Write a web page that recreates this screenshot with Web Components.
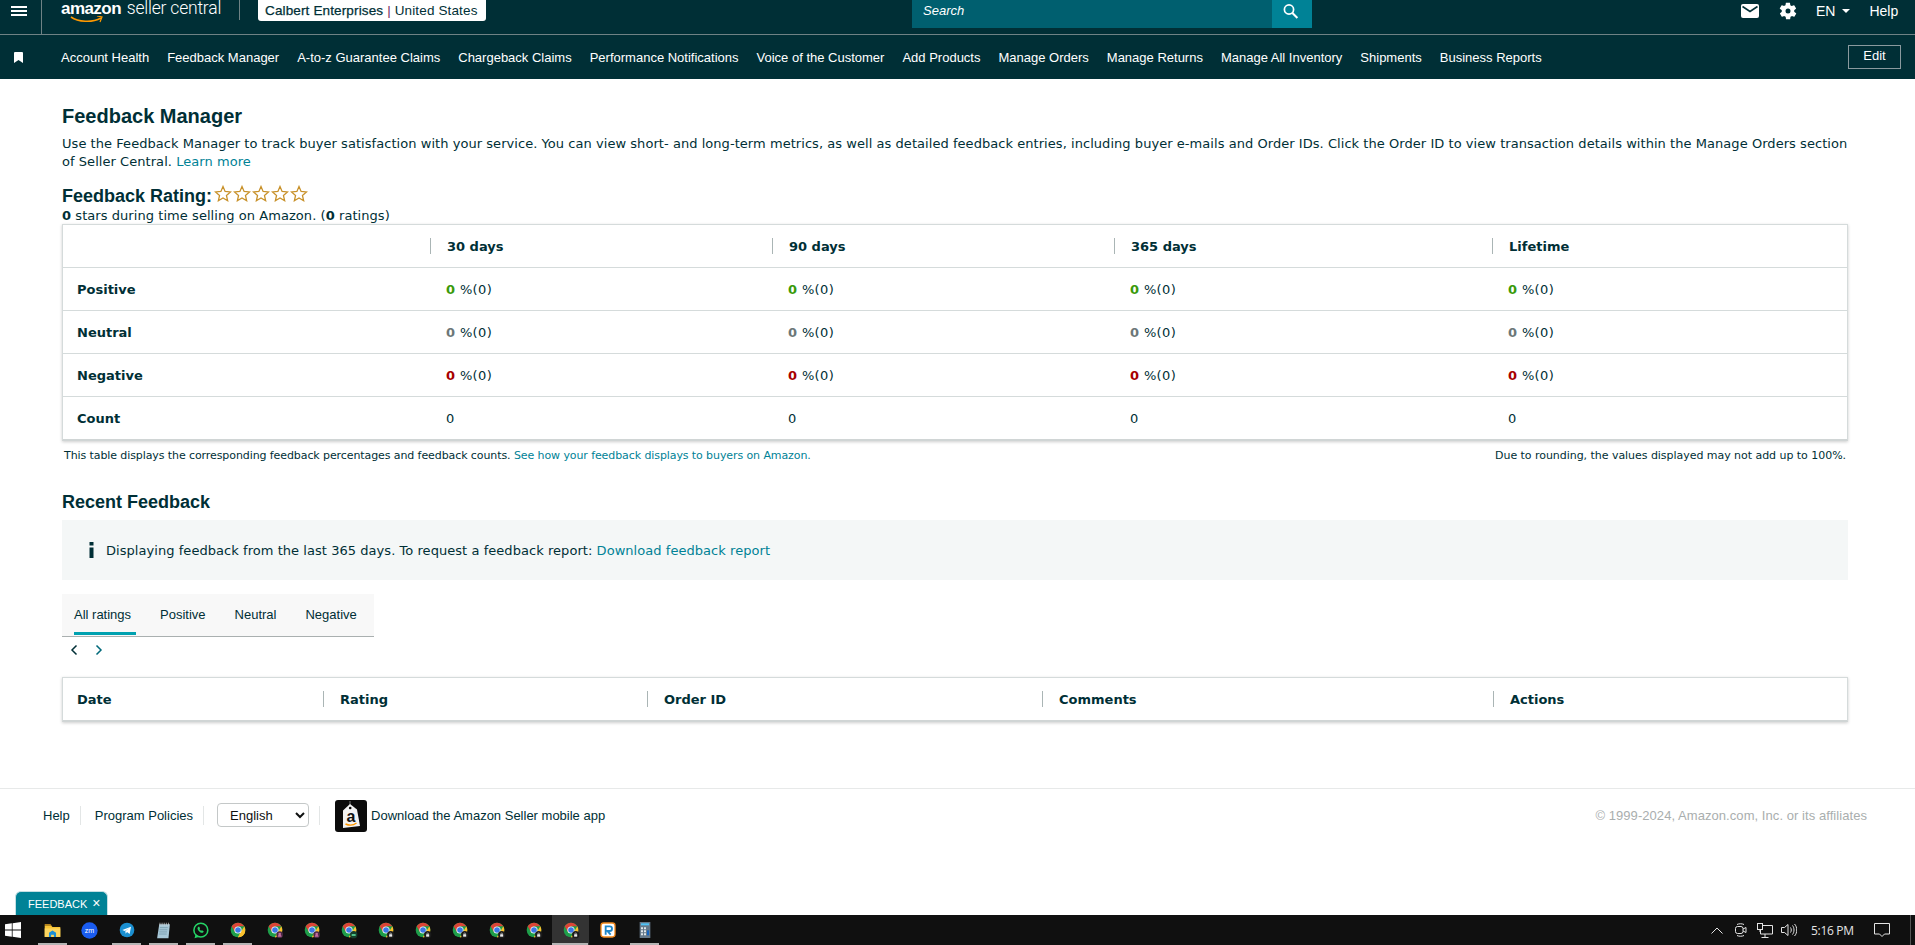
<!DOCTYPE html>
<html lang="en">
<head>
<meta charset="utf-8">
<title>Feedback Manager</title>
<style>
html, body { margin: 0; height: 100%; overflow: hidden; background: #fff; }
body { display: flex; flex-direction: column; height: 945px; font-family: "DejaVu Sans", sans-serif; color: #002f36; }
</style>
</head>
<body>
<sc-topbar></sc-topbar>
<sc-navbar>
  <nav-link>Account Health</nav-link>
  <nav-link>Feedback Manager</nav-link>
  <nav-link>A-to-z Guarantee Claims</nav-link>
  <nav-link>Chargeback Claims</nav-link>
  <nav-link>Performance Notifications</nav-link>
  <nav-link>Voice of the Customer</nav-link>
  <nav-link>Add Products</nav-link>
  <nav-link>Manage Orders</nav-link>
  <nav-link>Manage Returns</nav-link>
  <nav-link>Manage All Inventory</nav-link>
  <nav-link>Shipments</nav-link>
  <nav-link>Business Reports</nav-link>
</sc-navbar>
<feedback-page>
  <page-intro></page-intro>
  <metrics-table>
    <metric-row label="Positive" tone="#3a9a0a"></metric-row>
    <metric-row label="Neutral" tone="#6c7778"></metric-row>
    <metric-row label="Negative" tone="#a80000"></metric-row>
    <metric-row label="Count"></metric-row>
  </metrics-table>
  <table-note></table-note>
  <section-title>Recent Feedback</section-title>
  <info-notice></info-notice>
  <rating-tabs></rating-tabs>
  <recent-table></recent-table>
</feedback-page>
<sc-footer></sc-footer>
<win-taskbar></win-taskbar>

<script>
const LINK = '#008296';
const ARIAL = '"Liberation Sans", Arial, sans-serif';

function define(name, html, onConnect) {
  const t = document.createElement('template');
  t.innerHTML = html;
  customElements.define(name, class extends HTMLElement {
    constructor() {
      super();
      this.attachShadow({ mode: 'open' });
      this.shadowRoot.appendChild(t.content.cloneNode(true));
    }
    connectedCallback() {
      if (onConnect) onConnect(this, this.shadowRoot);
    }
  });
}

define('sc-topbar', `
<style>
:host { display: flex; align-items: flex-start; height: 34px; background: #002f36; border-bottom: 1px solid #6f8285; color: #fff; font-family: ${ARIAL}; flex: none; }
.burger { width: 42px; height: 34px; border-right: 1px solid #6f8285; box-sizing: border-box; flex: none; padding: 6px 0 0 11px; }
.burger svg { display: block; }
.logo { flex: none; width: 178px; margin-left: 19px; height: 28px; white-space: nowrap; }
.word { display: block; font-size: 17px; line-height: 16px; margin-top: 0; }
.word b { letter-spacing: -.55px; }
.word span { font-family: Roboto, sans-serif; font-weight: 300; letter-spacing: -.2px; margin-left: 1px; font-size: 17.5px; }
.smile { display: block; margin: -1px 0 0 9px; }
.sep { width: 1px; height: 20px; background: #6f8285; flex: none; }
.chip { margin-left: 18px; height: 21px; width: 228px; background: #fff; color: #002f36; border-radius: 0 0 3px 3px; font-size: 13.5px; letter-spacing: .14px; line-height: 21px; flex: none; box-sizing: border-box; padding-left: 7px; white-space: nowrap; }
.chip b { font-weight: 400; -webkit-text-stroke: .25px #002f36; }
.chip i { font-style: normal; color: #7a1f63; }
.search { margin-left: 426px; width: 360px; height: 28px; background: #005f6f; font-size: 13px; font-style: italic; line-height: 21px; padding-left: 11px; box-sizing: border-box; flex: none; }
.go { width: 40px; height: 28px; background: #008296; flex: none; padding: 3px 0 0 10px; box-sizing: border-box; }
.right { flex: none; display: flex; align-items: center; height: 21px; margin-left: 429px; font-size: 14px; }
.en { margin-left: 18px; }
.caret { width: 0; height: 0; border: 4px solid transparent; border-top: 4px solid #fff; border-bottom: 0; margin-left: 7px; }
.help { margin-left: 19px; }
.gear { margin-left: 19px; }
</style>
<div class="burger"><svg width="16" height="10"><rect width="16" height="2" y="0" fill="#fff"/><rect width="16" height="2" y="4" fill="#fff"/><rect width="16" height="2" y="8" fill="#fff"/></svg></div>
<div class="logo">
  <span class="word"><b>amazon</b> <span>seller central</span></span>
  <svg class="smile" width="34" height="8" viewBox="0 0 34 8"><path d="M1 1c7 5 21 6 30 1" fill="none" stroke="#f90" stroke-width="1.6"/><path d="M27 0l5 1-2 5" fill="none" stroke="#f90" stroke-width="1.2"/></svg>
</div>
<div class="sep"></div>
<div class="chip"><b>Calbert Enterprises</b> <i>|</i> United States</div>
<div class="search">Search</div>
<div class="go"><svg width="18" height="18" viewBox="0 0 18 18"><circle cx="7" cy="6.500" r="4.600" fill="none" stroke="#fff" stroke-width="1.700"/><path d="M10.400 10l5 5" stroke="#fff" stroke-width="2"/></svg></div>
<div class="right">
  <svg width="18" height="14" viewBox="0 0 18 14"><rect width="18" height="14" rx="2" fill="#fff"/><path d="M1.500 2.500L9 7.500l7.500-5" fill="none" stroke="#002f36" stroke-width="1.600"/></svg>
  <svg class="gear" width="20" height="20" viewBox="0 0 24 24"><path fill="#fff" fill-rule="evenodd" d="M19.400 13c.1-.3.1-.7.1-1s0-.7-.1-1l2.100-1.600c.2-.2.2-.4.1-.6l-2-3.500c-.1-.2-.4-.3-.6-.2l-2.500 1c-.5-.4-1.100-.7-1.700-1l-.4-2.600c0-.3-.2-.5-.5-.5h-4c-.3 0-.5.2-.5.4l-.4 2.700c-.6.2-1.100.6-1.700 1l-2.500-1c-.2-.1-.5 0-.6.2l-2 3.500c-.1.2-.1.4.1.6L4.600 11c-.1.3-.1.7-.1 1s0 .7.1 1l-2.100 1.600c-.2.2-.2.4-.1.6l2 3.500c.1.2.4.3.6.2l2.500-1c.5.4 1.100.7 1.700 1l.4 2.600c0 .3.2.5.5.5h4c.3 0 .5-.2.5-.4l.4-2.700c.6-.2 1.100-.6 1.700-1l2.500 1c.2.1.5 0 .6-.2l2-3.500c.1-.2.1-.4-.1-.6L19.400 13zM12 15a3 3 0 1 1 0-6 3 3 0 0 1 0 6z"/></svg>
  <span class="en">EN</span><span class="caret"></span><span class="help">Help</span>
</div>
`);

define('sc-navbar', `
<style>
:host { display: flex; align-items: center; height: 44px; background: #002f36; flex: none; font-family: ${ARIAL}; color: #fff; }
.mark { width: 61px; flex: none; padding: 0 0 0 14px; box-sizing: border-box; }
.mark svg { display: block; }
.links { display: flex; gap: 18px; flex: 1; padding-top: 2px; }
.edit { flex: none; width: 53px; height: 24px; margin: 0 14px 0 0; box-sizing: border-box; border: 1px solid #8a9a9e; text-align: center; font-size: 13px; line-height: 20px; }
</style>
<div class="mark"><svg width="9" height="11" viewBox="0 0 9 11"><path d="M0 1q0-1 1-1h7q1 0 1 1v10L4.500 8 0 11z" fill="#fff"/></svg></div>
<div class="links"><slot></slot></div>
<div class="edit">Edit</div>
`);

define('nav-link', `<style>:host { display: block; font-size: 13px; line-height: 16px; white-space: nowrap; }</style><slot></slot>`);

define('feedback-page', `
<style>:host { display: block; flex: 1; min-height: 0; padding: 25px 67px 0 62px; }</style>
<slot></slot>
`);

const star = '<svg width="18" height="18" viewBox="0 0 24 24"><path d="M12 2l2.800 6.600 7.200.7-5.400 4.700 1.600 7-6.200-3.700-6.200 3.700 1.600-7L2 9.300l7.200-.7z" fill="#fff" stroke="#c8912a" stroke-width="1.700" stroke-linejoin="miter"/></svg>';

define('page-intro', `
<style>
:host { display: block; font-family: "DejaVu Sans", sans-serif; color: #002f36; }
h1, h2 { margin: 0; font-family: ${ARIAL}; }
h1 { font-size: 20px; line-height: 24px; }
p { margin: 7px 0 0; font-size: 13px; line-height: 18px; letter-spacing: .05px; }
a { color: ${LINK}; }
.rate { display: flex; align-items: center; margin-top: 16px; height: 18px; }
h2 { font-size: 18px; line-height: 22px; }
.stars { display: flex; margin-left: 2px; margin-top: -4px; }
.stars svg { display: block; margin-right: 1px; }
.sub { font-size: 13px; line-height: 16px; margin-top: 3px; height: 16px; letter-spacing: .06px; }
</style>
<h1>Feedback Manager</h1>
<p>Use the Feedback Manager to track buyer satisfaction with your service. You can view short- and long-term metrics, as well as detailed feedback entries, including buyer e-mails and Order IDs. Click the Order ID to view transaction details within the Manage Orders section of Seller Central. <a>Learn more</a></p>
<div class="rate"><h2>Feedback Rating:</h2><div class="stars">${star.repeat(5)}</div></div>
<div class="sub"><b>0</b> stars during time selling on Amazon. (<b>0</b> ratings)</div>
`);

const CARD = `border: 1px solid #d5dbdb; border-bottom: 2px solid #d0d5d5; box-shadow: 0 1px 3px rgba(0,0,0,.2); background: #fff; font-family: "DejaVu Sans", sans-serif; font-size: 13px; color: #002f36;`;
const METRIC_COLS = '367px 342px 342px 378px 1fr';

define('metrics-table', `
<style>
:host { display: block; ${CARD} }
.head { display: grid; grid-template-columns: ${METRIC_COLS}; height: 42px; align-items: center; font-weight: 700; }
.head span { display: block; padding-left: 16px; border-left: 1px solid #aab5b5; height: 16px; line-height: 17px; }
.head span:empty { border-left: 0; }
</style>
<div class="head"><span></span><span>30 days</span><span>90 days</span><span>365 days</span><span>Lifetime</span></div>
<slot></slot>
`);

define('metric-row', `
<style>
:host { display: grid; grid-template-columns: ${METRIC_COLS}; height: 42px; border-top: 1px solid #d5dbdb; align-items: center; font-size: 13px; }
b.l { padding-left: 14px; }
span { padding-left: 16px; letter-spacing: .35px; }
</style>
<b class="l"></b>
`, (el, root) => {
  if (root.querySelector('span')) return;
  root.querySelector('.l').textContent = el.getAttribute('label');
  const tone = el.getAttribute('tone');
  for (let i = 0; i < 4; i++) {
    const c = document.createElement('span');
    c.innerHTML = tone ? `<b style="color:${tone}">0</b> %(0)` : '0';
    root.appendChild(c);
  }
});

define('table-note', `
<style>
:host { display: flex; justify-content: space-between; font-family: "DejaVu Sans", sans-serif; font-size: 11px; line-height: 14px; margin: 8px 2px 0 2px; color: #002f36; }
a { color: ${LINK}; }
div:first-of-type { letter-spacing: -.09px; }
div:last-of-type { letter-spacing: -.04px; }
</style>
<div>This table displays the corresponding feedback percentages and feedback counts. <a>See how your feedback displays to buyers on Amazon.</a></div>
<div>Due to rounding, the values displayed may not add up to 100%.</div>
`);

define('section-title', `
<style>:host { display: block; font-family: ${ARIAL}; font-weight: 700; font-size: 18px; line-height: 22px; margin-top: 28px; color: #002f36; }</style>
<slot></slot>
`);

define('info-notice', `
<style>
:host { display: flex; align-items: center; height: 60px; margin-top: 7px; background: #f4f7f7; font-family: "DejaVu Sans", sans-serif; font-size: 13px; letter-spacing: .05px; color: #002f36; }
svg { margin: 0 12px 0 27px; flex: none; }
a { color: ${LINK}; }
</style>
<svg width="5" height="16" viewBox="0 0 5 16"><rect x=".5" width="4" height="3.500" fill="#002f36"/><rect x=".5" y="5.500" width="4" height="10.500" fill="#002f36"/></svg>
<div>Displaying feedback from the last 365 days. To request a feedback report: <a>Download feedback report</a></div>
`);

define('rating-tabs', `
<style>
:host { display: block; margin-top: 14px; font-family: ${ARIAL}; font-size: 13px; color: #002f36; }
.bar { width: 312px; height: 43px; box-sizing: border-box; background: #f8f8f8; border-bottom: 1px solid #aab0b0; display: flex; padding-left: 12px; }
.tab { flex: none; margin-right: 29px; padding-top: 13px; line-height: 16px; white-space: nowrap; }
.on { width: 62px; margin-right: 24px; box-sizing: border-box; border-bottom: 3px solid #00a1b0; height: 41px; }
.nav { display: flex; gap: 17px; padding: 7px 0 0 8px; height: 40px; box-sizing: border-box; }
.nav svg { display: block; }
</style>
<div class="bar"><div class="tab on">All ratings</div><div class="tab">Positive</div><div class="tab">Neutral</div><div class="tab">Negative</div></div>
<div class="nav">
  <svg width="8" height="12" viewBox="0 0 8 12"><path d="M6.500 1.500L2 6l4.500 4.500" fill="none" stroke="#002f36" stroke-width="1.500"/></svg>
  <svg width="8" height="12" viewBox="0 0 8 12"><path d="M1.500 1.500L6 6l-4.500 4.500" fill="none" stroke="#00697a" stroke-width="1.500"/></svg>
</div>
`);

define('recent-table', `
<style>
:host { display: grid; grid-template-columns: 260px 324px 395px 451px 1fr; height: 42px; align-items: center; font-weight: 700; ${CARD} }
span { display: block; padding-left: 16px; border-left: 1px solid #aab5b5; height: 16px; line-height: 18px; }
span:first-of-type { border-left: 0; padding-left: 14px; }
</style>
<span>Date</span><span>Rating</span><span>Order ID</span><span>Comments</span><span>Actions</span>
`);

define('sc-footer', `
<style>
:host { display: block; flex: none; height: 127px; box-sizing: border-box; border-top: 1px solid #e7e9e9; font-family: ${ARIAL}; font-size: 13px; color: #002f36; position: relative; }
.row { display: flex; align-items: center; height: 24px; margin-top: 14px; padding-left: 43px; }
.rule { width: 1px; height: 19px; background: #e3e6e6; margin: 0 14px 0 10px; flex: none; }
.rule.before { margin-right: 13px; }
select { width: 92px; height: 24px; font: 13px ${ARIAL}; color: #0f1111; background: #fff; border: 1px solid #c4c8c8; border-radius: 4px; padding-left: 8px; margin-right: 0; }
.app { margin: 2px 4px 0 1px; display: block; flex: none; }
.copy { margin-left: auto; padding-right: 48px; color: #a9aeae; font-size: 13px; letter-spacing: .06px; }
.tab { position: absolute; left: 15px; bottom: 0; width: 93px; height: 24px; box-sizing: border-box; background: #008296; border: 1px solid #c5dfe3; border-bottom: 0; border-radius: 6px 6px 0 0; color: #fff; font-size: 11px; line-height: 23px; padding-left: 12px; white-space: nowrap; }
.tab span { margin-left: 5px; font-size: 14px; }
</style>
<div class="row">
  <span>Help</span><div class="rule"></div>
  <span>Program Policies</span><div class="rule before"></div>
  <select><option>English</option></select><div class="rule"></div>
  <svg class="app" width="32" height="32" viewBox="0 0 32 32">
    <rect width="32" height="32" rx="3" fill="#0b0b0b"/>
    <path d="M15 1v7" stroke="#999" stroke-width=".8"/>
    <path d="M8 10.500l7-6.500 7 5.500L25 26l-17 2z" fill="#f3f3f3"/>
    <circle cx="15.200" cy="8" r="1.300" fill="#0b0b0b"/>
    <text x="11.500" y="21.500" font-family="Liberation Sans, sans-serif" font-weight="700" font-size="16" fill="#111">a</text>
    <path d="M10.500 24c3.500 1.500 8 1.300 11-1" fill="none" stroke="#f90" stroke-width="1.400"/>
  </svg>
  <span>Download the Amazon Seller mobile app</span>
  <span class="copy">© 1999-2024, Amazon.com, Inc. or its affiliates</span>
</div>
<div class="tab">FEEDBACK<span>×</span></div>
`);

// taskbar glyphs, roughly the size they are on a real Windows bar
const CHROME = `<circle cx="12" cy="12" r="11" fill="#1e9e4a"/>
<path d="M12 12L22.500 15.500A11 11 0 0 1 12 23L17 13z" fill="#fbc02d"/>
<path d="M2.500 6.500A11 11 0 0 1 21.500 6.500H12L7.200 14.800z" fill="#dc4437"/>
<path d="M21.500 6.500A11 11 0 0 1 12 23l5-9z" fill="#fbc02d"/>
<circle cx="12" cy="12" r="5.400" fill="#fff"/><circle cx="12" cy="12" r="4.200" fill="#3b78e7"/>`;
const ICONS = {
  explorer: `<path d="M1 5h9l2 2h11v14H1z" fill="#f8c537"/><path d="M1 3h8l2 2H1z" fill="#e8a820"/><path d="M1 9h22v12H1z" fill="#fcd55f"/><path d="M7 21v-6l5-3 5 3v6h-3v-3h-4v3z" fill="#1c8fd6"/>`,
  zoom: `<circle cx="12" cy="12" r="11.500" fill="#1a5cf0"/><text x="12" y="15.500" text-anchor="middle" font-family="Liberation Sans, sans-serif" font-size="10" fill="#fff">zm</text>`,
  telegram: `<circle cx="12" cy="12" r="11" fill="#1b8fd0"/><path d="M5 12l13-5-2 11-4-3-2 2.500-.5-4L16 9l-7.500 4.500z" fill="#fff"/>`,
  notes: `<path d="M6 3h15l-2 20H3z" fill="#a8c8d8"/><path d="M7 1v4M10 1v4M13 1v4M16 1v4M19 1v4" stroke="#ddd" stroke-width="1"/><path d="M7 8h11M6.500 11h11M6 14h11M5.500 17h11" stroke="#6f93a5" stroke-width="1"/>`,
  whatsapp: `<circle cx="12.500" cy="11.500" r="9.800" fill="none" stroke="#25d366" stroke-width="2.200"/><path d="M3.500 23l1.800-6 4 4z" fill="#25d366"/><path d="M8.500 7c-1.500 1.500-.5 4 1.500 6s4.500 3 6 1.500l.5-1.500-2.500-1.500-1 1c-1-.3-2.200-1.500-2.500-2.500l1-1L10 6.500z" fill="#25d366"/>`,
  chrome: CHROME,
  roboform: `<rect x="1.500" y="1.500" width="21" height="21" rx="4" fill="#fff" stroke="#f28a1e" stroke-width="2"/><path d="M8.500 19V6.500h6a3.500 3.500 0 0 1 0 7H11l5 5.500" fill="none" stroke="#1e86c8" stroke-width="2.800"/>`,
  calc: `<rect x="4" y="0" width="16" height="24" fill="#66798a"/><rect x="6" y="2" width="12" height="3" fill="#4fc3f7"/><path d="M6 8h3v3H6zM10.500 8h3v3h-3zM6 12.500h3v3H6zM10.500 12.500h3v3h-3zM6 17h3v3H6zM10.500 17h3v3h-3z" fill="#dfe6ea"/><rect x="15" y="12.500" width="3" height="7.500" fill="#1565c0"/>`
};
const BADGES = {
  pink: '<circle cx="19" cy="19" r="5" fill="#4a2a44"/><circle cx="19" cy="18" r="2" fill="#c76aa0"/><path d="M16 22a3 3 0 0 1 6 0z" fill="#c76aa0"/>',
  green: '<circle cx="19" cy="19" r="5.500" fill="#15402c"/><path d="M16 21v-3h6v3z" fill="#4fbf87"/>',
  lock: '<circle cx="19" cy="19" r="5.500" fill="#1c1c1c"/><path d="M16.700 18.500h4.600V22h-4.600z" fill="#e8e8e8"/><circle cx="19" cy="17.800" r="1.300" fill="none" stroke="#e8e8e8" stroke-width=".8"/>'
};

define('task-icon', `
<style>
:host { display: flex; align-items: center; justify-content: center; width: 37px; height: 30px; position: relative; flex: none; }
:host([active]) { background: #333; }
svg { display: block; overflow: visible; }
.run { position: absolute; left: 4px; right: 4px; bottom: 0; height: 2px; background: #b4b4b4; }
:host([active]) .run { left: 0; right: 1px; }
</style>
`, (el, root) => {
  if (root.querySelector('svg')) return;
  const kind = el.getAttribute('kind');
  const size = kind === 'chrome' ? 16 : (kind === 'notes' || kind === 'zoom' || kind === 'explorer' || kind === 'whatsapp') ? 17 : 16;
  const badge = BADGES[el.getAttribute('badge')] || '';
  root.innerHTML += `<svg width="${size}" height="${size}" viewBox="0 0 24 24">${ICONS[kind]}${badge}</svg>`;
  if (el.hasAttribute('running') || el.hasAttribute('active')) root.innerHTML += '<div class="run"></div>';
});

define('win-taskbar', `
<style>
:host { display: flex; align-items: center; flex: none; height: 30px; background: #101010; color: #e4e4e4; font-family: "Open Sans", sans-serif; }
.start { width: 34px; height: 30px; flex: none; padding: 7px 0 0 5px; box-sizing: border-box; }
.start svg, .cell svg { display: block; }
.tray { margin-left: auto; display: flex; align-items: center; height: 30px; flex: none; }
.cell { width: 24px; display: flex; justify-content: center; flex: none; }
.time { width: 41px; margin: 0 0 0 10px; font-size: 12px; white-space: nowrap; letter-spacing: -.3px; }
.note { margin-left: 15px; width: 30px; }
.edge { width: 1px; height: 30px; background: #555; margin: 0 4px 0 13px; }
</style>
<div class="start"><svg width="16" height="16" viewBox="0 0 16 16"><path d="M0 2.300L6.800 1.300V7.600H0zM7.600 1.200L16 0v7.600H7.600zM0 8.400H6.800V14.700L0 13.700zM7.600 8.400H16V16L7.600 14.800z" fill="#fff"/></svg></div>
<task-icon kind="explorer" running></task-icon>
<task-icon kind="zoom"></task-icon>
<task-icon kind="telegram" running></task-icon>
<task-icon kind="notes" running></task-icon>
<task-icon kind="whatsapp" running></task-icon>
<task-icon kind="chrome" running></task-icon>
<task-icon kind="chrome" badge="pink"></task-icon>
<task-icon kind="chrome" badge="pink"></task-icon>
<task-icon kind="chrome" badge="green"></task-icon>
<task-icon kind="chrome" badge="lock"></task-icon>
<task-icon kind="chrome" badge="lock"></task-icon>
<task-icon kind="chrome" badge="lock"></task-icon>
<task-icon kind="chrome" badge="lock"></task-icon>
<task-icon kind="chrome" badge="lock"></task-icon>
<task-icon kind="chrome" badge="lock" active></task-icon>
<task-icon kind="roboform"></task-icon>
<task-icon kind="calc" running></task-icon>
<div class="tray">
  <div class="cell"><svg width="12" height="7" viewBox="0 0 12 7"><path d="M.5 6.500L6 1l5.500 5.500" fill="none" stroke="#e4e4e4"/></svg></div>
  <div class="cell"><svg width="12" height="16" viewBox="0 0 12 16"><rect x=".5" y="4.500" width="7.500" height="7" rx="2" fill="none" stroke="#e4e4e4"/><path d="M8 7l3-1.500v5L8 9M2 2.500c2-1 5-1 7 0M2 13.500c2 1 5 1 7 0" fill="none" stroke="#e4e4e4"/></svg></div>
  <div class="cell"><svg width="16" height="15" viewBox="0 0 16 15"><path d="M5.500 2.500H15.500V11H3.500V7M8 11v3M4.500 14.500h7" fill="none" stroke="#e4e4e4"/><rect x=".5" y=".5" width="5" height="6" fill="none" stroke="#e4e4e4"/><path d="M3 6.500v2.500" stroke="#e4e4e4"/></svg></div>
  <div class="cell"><svg width="16" height="14" viewBox="0 0 16 14"><path d="M.5 4.500h3L7 1.500v11l-3.500-3h-3zM9.500 4.500c1 1.500 1 3.500 0 5M11.500 2.500c2 2.500 2 6.500 0 9M13.500 1c3 3 3 9 0 12" fill="none" stroke="#e4e4e4"/></svg></div>
  <div class="time">5:16 PM</div>
  <div class="cell note"><svg width="16" height="16" viewBox="0 0 16 16"><path d="M.5 1.500h15v10.500H10.500L8 14.500 5.500 12H.5z" fill="none" stroke="#e4e4e4"/></svg></div>
  <div class="edge"></div>
</div>
`);
</script>
</body>
</html>
